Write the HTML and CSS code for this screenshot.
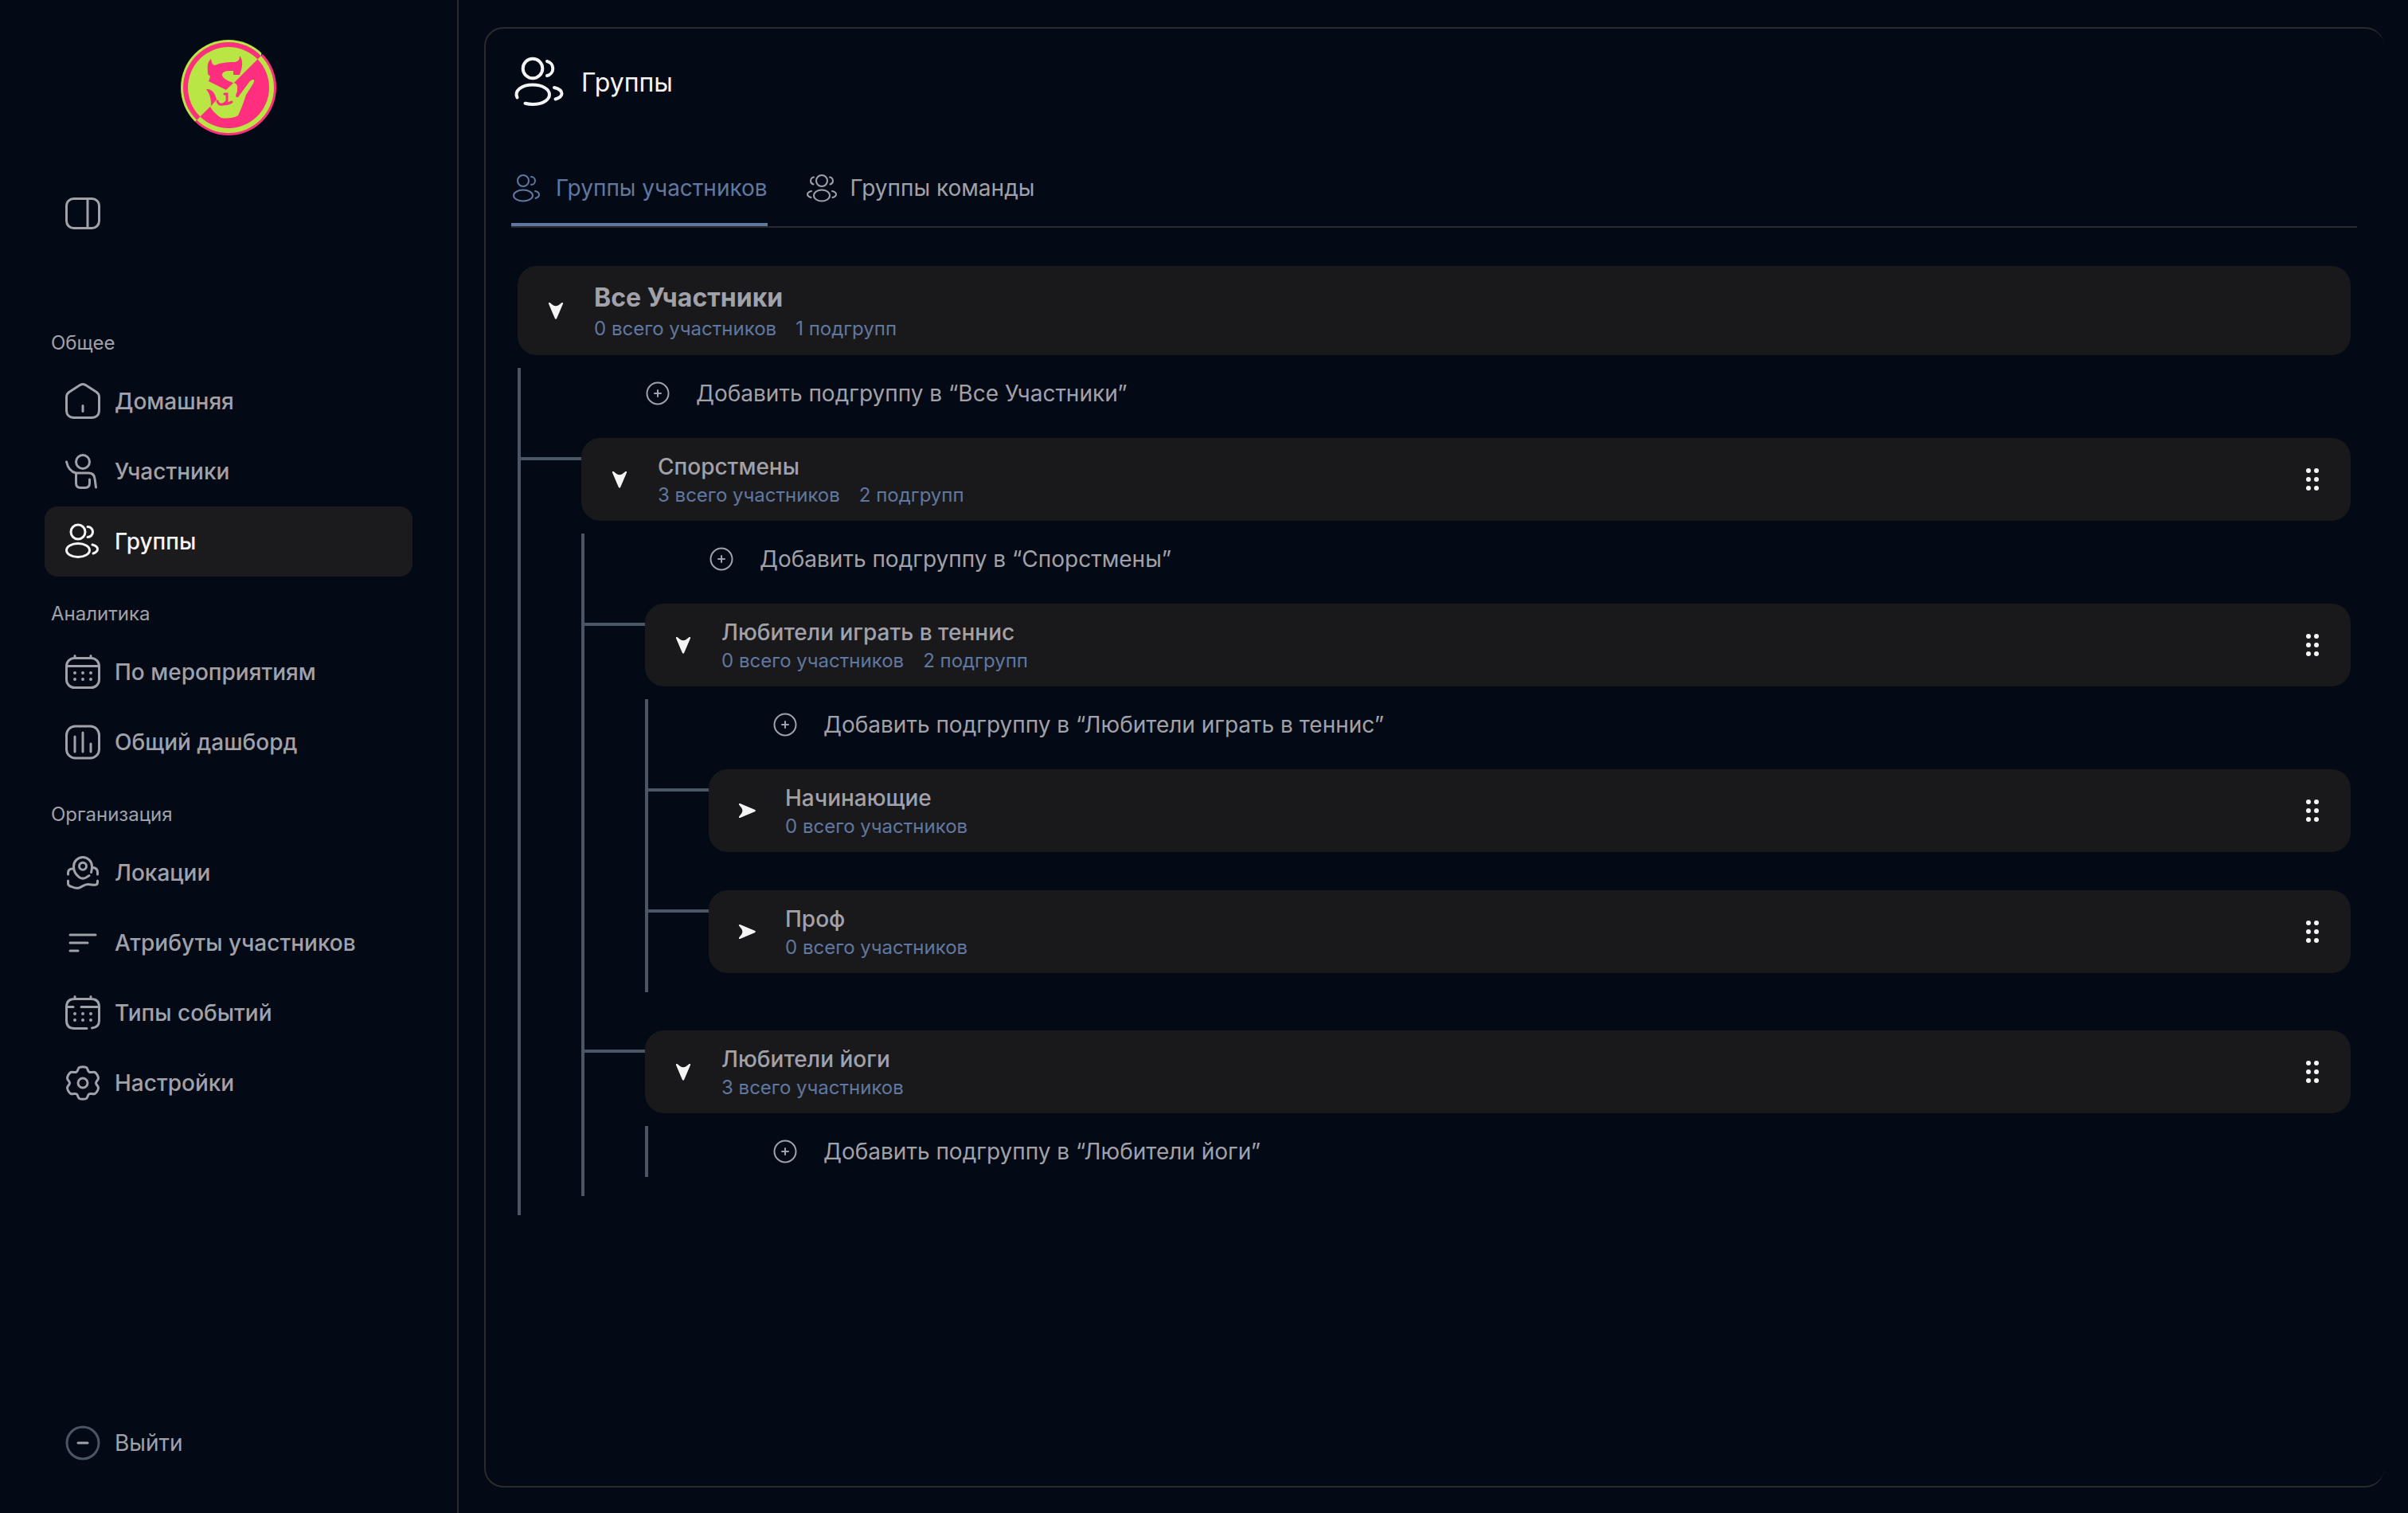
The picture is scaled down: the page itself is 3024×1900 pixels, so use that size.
FILE: index.html
```
<!DOCTYPE html>
<html lang="ru">
<head>
  <meta charset="UTF-8">
  <meta name="viewport" content="width=device-width, initial-scale=1.0">
  <title>Группы</title>
  <link rel="stylesheet" href="styles.css">
</head>
<body>
<!-- Shared icons -->
<svg class="sprite" aria-hidden="true">
  <symbol id="i-arrow" viewBox="0 0 24 24">
    <path d="M3 3.400C2.500 2 3.700 1.500 4.800 2.200L8.500 5.200C10.800 6.700 13.200 6.700 15.500 5.200L19.200 2.200C20.300 1.500 21.500 2 21 3.400L13.200 21.800C12.600 23.200 11.400 23.200 10.800 21.800Z"/>
  </symbol>
  <symbol id="i-plus" viewBox="0 0 32 32">
    <circle cx="16" cy="16" r="13.500"/>
    <path d="M16 12v8M12 16h8"/>
  </symbol>
  <symbol id="i-grip" viewBox="0 0 16 28">
    <circle cx="3" cy="3" r="3"/><circle cx="13" cy="3" r="3"/>
    <circle cx="3" cy="14" r="3"/><circle cx="13" cy="14" r="3"/>
    <circle cx="3" cy="25" r="3"/><circle cx="13" cy="25" r="3"/>
  </symbol>
</svg>

<div class="layout">
  <aside class="sidebar">
    <a class="logo" href="#" aria-label="Главная">
      <svg viewBox="0 0 120 120">
        <defs>
          <clipPath id="half-top"><path d="M0 0H104L101 20 20 101 0 120Z"/></clipPath>
          <clipPath id="half-bottom"><path d="M120 0H120V120H0L20 101 101 20Z"/></clipPath>
        </defs>
        <g clip-path="url(#half-top)">
          <circle cx="60" cy="60" r="60" fill="#b9e545"/>
          <circle cx="60" cy="60" r="57" fill="#ff2e7e"/>
          <circle cx="60" cy="60" r="51" fill="#b9e545"/>
        </g>
        <g clip-path="url(#half-bottom)">
          <circle cx="60" cy="60" r="60" fill="#ff2e7e"/>
          <circle cx="60" cy="60" r="57" fill="#b9e545"/>
          <circle cx="60" cy="60" r="51" fill="#ff2e7e"/>
        </g>
        <path fill="#ff2e7e" d="M38 24C32 29 34 36 34 43L37 46 35 52 57 63 66 54C57 51 50 46 52 43 54 38 61 39 66 39V44H74C76 37 80 28 74 20C74 26 71 28 66 28 57 28 49 29 43 32 39 31 39 28 38 24Z"/>
        <path fill="#b9e545" d="M67 54C72 56 71 59 71 65 68 70 69 73 72 72L86 53C91 48 94 50 91 55L82 69C79 78 76 87 72 95 65 99 56 99 51 98 44 94 39 88 37 84L57 63Z"/>
        <path fill="#ff2e7e" d="M32 62C39 61 43 67 45 75L38 83C38 77 38 70 32 62Z"/>
        <path fill="none" stroke="#ff2e7e" stroke-width="3" stroke-linecap="round" d="M55 68H58V80M46 77C48 83 54 82 57 78M53 81C56 81 61 80 64 78"/>
      </svg>
    </a>

    <button class="toggle" type="button" aria-label="Свернуть меню">
      <svg class="icon" viewBox="0 0 48 48"><rect x="3.500" y="5.500" width="41" height="37" rx="9"/><path d="M30 6v36"/></svg>
    </button>

    <nav class="nav">
      <h2 class="nav-label">Общее</h2>
      <a class="nav-item" href="#">
        <svg class="icon" viewBox="0 0 48 48"><path d="M3.500 18.500c0-3 1-4.500 3.500-6.200L20.500 3.600c2.500-1.500 4.500-1.500 7 0L41 12.300c2.500 1.700 3.500 3.200 3.500 6.200V35c0 6-3.500 9.500-9.500 9.500H13c-6 0-9.500-3.500-9.500-9.500ZM24 29.500v7"/></svg>
        Домашняя
      </a>
      <a class="nav-item" href="#">
        <svg class="icon" viewBox="0 0 48 48"><circle cx="24" cy="12" r="8.500"/><path d="M3.500 12C5 19 9 24.500 15.500 26H31c5 0 7.500 2 8 7L40.500 44M15.500 26v12.500c0 4 1.500 6 5.500 6h6c4 0 5.500-2 5.500-6V34"/></svg>
        Участники
      </a>
      <a class="nav-item active" href="#">
        <svg class="icon" viewBox="0 0 48 48"><circle cx="18" cy="12" r="9"/><path d="M30 5.500a6.500 6.500 0 0 1 0 13M36 28c4 1 6.500 3 6.500 5.500S40 38 37 39"/><ellipse cx="18" cy="35" rx="14.500" ry="8.500"/></svg>
        Группы
      </a>

      <h2 class="nav-label">Аналитика</h2>
      <a class="nav-item" href="#">
        <svg class="icon" viewBox="0 0 48 48"><rect x="3.500" y="6.500" width="41" height="37" rx="10"/><path d="M4 16.500h40M14 3.500v3M34 3.500v3"/><path class="dots" d="M14 25h0M24 25h0M34 25h0M14 33h0M24 33h0M34 33h0"/></svg>
        По мероприятиям
      </a>
      <a class="nav-item" href="#">
        <svg class="icon" viewBox="0 0 48 48"><rect x="3.500" y="4" width="41" height="40" rx="11"/><path d="M14 17v19M24 12v24M34 26v10"/></svg>
        Общий дашборд
      </a>

      <h2 class="nav-label">Организация</h2>
      <a class="nav-item" href="#">
        <svg class="icon" viewBox="0 0 48 48"><circle cx="24" cy="15.700" r="4.500"/><path d="M32 27.500L28 30c-2.500 1.400-5.500 1.400-8 0-5-3.500-7.500-9-7.500-14a11.500 11.500 0 0 1 23 0c0 3-.3 5-1 7.500M11 19c-3.500 0-5.500 1.500-5.500 5v2M37 17.500c3.500.5 5.500 2.500 5.500 6v2.500M5.500 34v3.500c0 2.500 2 3.500 4.500 4 3 1.500 6 2.500 9 1.500 4-1.500 7-4.500 11.500-4.500 3 0 6 1 9 .8 2-.2 3-1.300 3-3V34"/></svg>
        Локации
      </a>
      <a class="nav-item" href="#">
        <svg class="icon" viewBox="0 0 48 48"><path d="M8 14h32M8 24h22M8 34h10"/></svg>
        Атрибуты участников
      </a>
      <a class="nav-item" href="#">
        <svg class="icon" viewBox="0 0 48 48"><path d="M29 43.500H13.500c-6.500 0-10-3.500-10-10v-17c0-6.500 3.500-10 10-10h21c6.500 0 10 3.500 10 10v17c0 5.500-3 9-9 9.500M4 16.500h8M22 16.500h22M14 3.500v3M34 3.500v3"/><path class="dots" d="M14 25h0M24 25h0M34 25h0M14 33h0M24 33h0M34 33h0"/></svg>
        Типы событий
      </a>
      <a class="nav-item" href="#">
        <svg class="icon" viewBox="0 0 48 48"><circle cx="24" cy="24" r="6"/><path d="M19.500 4.500c2-1 7-1 9 0 2 1.500 1.500 4.500 3.500 5.700 2.200 1.300 4.500-.7 7 .300 2.300 1 4.500 5 4.500 7.500 0 2.500-3 3.500-3 6s3 3.500 3 6c0 2.500-2.200 6.500-4.500 7.500-2.500 1-4.800-1-7 .300-2 1.200-1.500 4.200-3.500 5.700-2 1-7 1-9 0-2-1.500-1.500-4.500-3.500-5.700-2.200-1.300-4.500.7-7-.300-2.300-1-4.500-5-4.500-7.500 0-2.500 3-3.500 3-6s-3-3.500-3-6c0-2.500 2.200-6.500 4.500-7.500 2.500-1 4.800 1 7-.300 2-1.200 1.500-4.200 3.500-5.700Z"/></svg>
        Настройки
      </a>
    </nav>

    <button class="nav-item logout" type="button">
      <svg class="icon" viewBox="0 0 48 48"><circle class="ring" cx="24" cy="24" r="20"/><path d="M18 24h12"/></svg>
      Выйти
    </button>
  </aside>

  <main class="panel">
    <header class="page-header">
      <svg class="page-icon" viewBox="0 0 72 72"><circle cx="27" cy="18" r="12.300"/><path d="M45 9a9.200 9.200 0 0 1 0 18M54 42c6 1.500 9.500 4 9.500 7.500S60.500 55 55.500 56.500M7.500 54.500C3.500 46 13 38.500 27 38.500c12 0 21 5.500 21 12.300S39 63 27 63c-3.500 0-6.500-.400-9.500-1.200"/></svg>
      <h1>Группы</h1>
    </header>

    <div class="tabs" role="tablist">
      <button class="tab active" type="button" role="tab" aria-selected="true">
        <svg class="tab-icon" viewBox="0 0 40 40"><circle cx="15" cy="11" r="7"/><path d="M25 6a5 5 0 0 1 0 10M30 24c3.500.8 5 2.500 5 4.500s-1.500 3.500-4.500 4.500"/><ellipse cx="15" cy="29.500" rx="12" ry="7"/></svg>
        Группы участников
      </button>
      <button class="tab" type="button" role="tab" aria-selected="false">
        <svg class="tab-icon" viewBox="0 0 40 40"><circle cx="20" cy="11" r="7"/><path d="M30 6.500a4.600 4.600 0 0 1 .5 9M10 6.500a4.600 4.600 0 0 0-.5 9M33 24c3.500.8 5 2.200 5 4s-1.500 3.200-4.500 4M7 24c-3.500.8-5 2.200-5 4s1.500 3.200 4.500 4"/><ellipse cx="20" cy="29.500" rx="10" ry="7"/></svg>
        Группы команды
      </button>
    </div>

    <div class="tree">
      <div class="group root">
        <button class="arrow" type="button" aria-label="Свернуть"><svg><use href="#i-arrow"/></svg></button>
        <div class="group-info">
          <h3>Все Участники</h3>
          <p><span>0 всего участников</span><span>1 подгрупп</span></p>
        </div>
      </div>
      <ul class="children">
        <li class="add-row"><button class="add" type="button"><svg><use href="#i-plus"/></svg>Добавить подгруппу в “Все Участники”</button></li>
        <li class="node">
          <span class="branch"></span>
          <div class="node-body">
            <div class="group">
              <button class="arrow" type="button" aria-label="Свернуть"><svg><use href="#i-arrow"/></svg></button>
              <div class="group-info">
                <h3>Спорстмены</h3>
                <p><span>3 всего участников</span><span>2 подгрупп</span></p>
              </div>
              <button class="grip" type="button" aria-label="Переместить"><svg><use href="#i-grip"/></svg></button>
            </div>
            <ul class="children">
              <li class="add-row"><button class="add" type="button"><svg><use href="#i-plus"/></svg>Добавить подгруппу в “Спорстмены”</button></li>
              <li class="node">
                <span class="branch"></span>
                <div class="node-body">
                  <div class="group">
                    <button class="arrow" type="button" aria-label="Свернуть"><svg><use href="#i-arrow"/></svg></button>
                    <div class="group-info">
                      <h3>Любители играть в теннис</h3>
                      <p><span>0 всего участников</span><span>2 подгрупп</span></p>
                    </div>
                    <button class="grip" type="button" aria-label="Переместить"><svg><use href="#i-grip"/></svg></button>
                  </div>
                  <ul class="children">
                    <li class="add-row"><button class="add" type="button"><svg><use href="#i-plus"/></svg>Добавить подгруппу в “Любители играть в теннис”</button></li>
                    <li class="node">
                      <span class="branch"></span>
                      <div class="node-body">
                        <div class="group">
                          <button class="arrow closed" type="button" aria-label="Развернуть"><svg><use href="#i-arrow"/></svg></button>
                          <div class="group-info">
                            <h3>Начинающие</h3>
                            <p><span>0 всего участников</span></p>
                          </div>
                          <button class="grip" type="button" aria-label="Переместить"><svg><use href="#i-grip"/></svg></button>
                        </div>
                      </div>
                    </li>
                    <li class="node">
                      <span class="branch"></span>
                      <div class="node-body">
                        <div class="group">
                          <button class="arrow closed" type="button" aria-label="Развернуть"><svg><use href="#i-arrow"/></svg></button>
                          <div class="group-info">
                            <h3>Проф</h3>
                            <p><span>0 всего участников</span></p>
                          </div>
                          <button class="grip" type="button" aria-label="Переместить"><svg><use href="#i-grip"/></svg></button>
                        </div>
                      </div>
                    </li>
                  </ul>
                </div>
              </li>
              <li class="node">
                <span class="branch"></span>
                <div class="node-body">
                  <div class="group">
                    <button class="arrow" type="button" aria-label="Свернуть"><svg><use href="#i-arrow"/></svg></button>
                    <div class="group-info">
                      <h3>Любители йоги</h3>
                      <p><span>3 всего участников</span></p>
                    </div>
                    <button class="grip" type="button" aria-label="Переместить"><svg><use href="#i-grip"/></svg></button>
                  </div>
                  <ul class="children">
                    <li class="add-row"><button class="add" type="button"><svg><use href="#i-plus"/></svg>Добавить подгруппу в “Любители йоги”</button></li>
                  </ul>
                </div>
              </li>
            </ul>
          </div>
        </li>
      </ul>
    </div>
  </main>
</div>
</body>
</html>
```
FILE: styles.css
```
:root {
  --bg: #030a15;
  --card: #19191b;
  --border: #2b2b2e;
  --line: #4b5563;
  --text: #a1a1aa;
  --bright: #f4f4f5;
  --accent: #6078a0;
}

* {
  box-sizing: border-box;
  margin: 0;
  padding: 0;
}

body {
  background-color: var(--bg);
  color: var(--text);
  font-family: Inter, "Liberation Sans", sans-serif;
  font-size: 28px;
  line-height: 40px;
}

button {
  background: none;
  border: none;
  color: inherit;
  font: inherit;
  cursor: pointer;
}

a {
  color: inherit;
  text-decoration: none;
}

ul {
  list-style: none;
}

svg {
  display: block;
  flex-shrink: 0;
}

.sprite {
  display: none;
}

.layout {
  display: flex;
  min-height: 100vh;
}

/* Sidebar */
.sidebar {
  width: 576px;
  flex-shrink: 0;
  display: flex;
  flex-direction: column;
  padding: 50px 56px 44px;
  border-right: 2px solid var(--border);
}

.logo {
  align-self: center;
}

.logo svg {
  width: 120px;
  height: 120px;
}

.toggle {
  align-self: flex-start;
  margin: 74px 0 92px;
  padding: 0 24px;
}

.icon {
  width: 48px;
  height: 48px;
  fill: none;
  stroke: currentColor;
  stroke-width: 3;
  stroke-linecap: round;
  stroke-linejoin: round;
}

.icon .dots {
  stroke-width: 4;
}

.icon .ring {
  stroke: var(--line);
}

.nav {
  flex: 1;
}

.nav-label {
  padding: 31px 8px 13px;
  font-size: 24px;
  font-weight: 400;
  line-height: 32px;
}

.nav-item {
  display: flex;
  align-items: center;
  gap: 16px;
  width: 100%;
  height: 88px;
  padding: 0 24px;
  border-radius: 16px;
  font-weight: 500;
}

.nav-item.active {
  background-color: #1b1b1d;
  color: var(--bright);
}

.logout {
  font-weight: 400;
}

/* Content panel */
.panel {
  flex: 1;
  margin: 34px 30px 32px 32px;
  padding: 32px 34px 32px 32px;
  border: 2px solid var(--border);
  border-right: none;
  border-radius: 24px;
}

.page-header {
  display: flex;
  align-items: center;
  gap: 16px;
  color: var(--bright);
}

.page-icon {
  width: 72px;
  height: 72px;
  fill: none;
  stroke: currentColor;
  stroke-width: 4;
  stroke-linecap: round;
}

h1 {
  font-size: 32px;
  font-weight: 400;
}

.tabs {
  display: flex;
  gap: 48px;
  margin-top: 60px;
  border-bottom: 2px solid var(--border);
}

.tab {
  display: flex;
  align-items: center;
  gap: 16px;
  padding: 16px 0 24px;
  border-bottom: 4px solid transparent;
}

.tab.active {
  color: var(--accent);
  border-bottom-color: var(--accent);
}

.tab-icon {
  width: 40px;
  height: 40px;
  fill: none;
  stroke: currentColor;
  stroke-width: 2;
  stroke-linecap: round;
}

/* Group tree */
.tree {
  padding: 48px 8px;
}

.group {
  display: flex;
  align-items: center;
  gap: 24px;
  height: 104px;
  padding: 0 24px;
  background-color: var(--card);
  border-radius: 24px;
}

.group.root {
  height: 112px;
}

.arrow,
.grip {
  display: flex;
  align-items: center;
  justify-content: center;
  width: 48px;
  height: 48px;
  color: var(--bright);
}

.arrow svg {
  width: 24px;
  height: 24px;
  fill: currentColor;
}

.arrow.closed svg {
  transform: rotate(-90deg);
}

.grip svg {
  width: 16px;
  height: 28px;
  fill: currentColor;
}

.group-info {
  flex: 1;
  padding-top: 4px;
}

.group h3 {
  font-size: 28px;
  font-weight: 500;
  line-height: 36px;
}

.group.root h3 {
  font-size: 32px;
  font-weight: 700;
  line-height: 42px;
}

.group p {
  display: flex;
  gap: 24px;
  color: var(--accent);
  font-size: 24px;
  line-height: 36px;
}

.children {
  margin-top: 16px;
  border-left: 4px solid var(--line);
}

.add-row {
  padding-left: 156px;
}

.add {
  display: flex;
  align-items: center;
  gap: 32px;
  height: 64px;
}

.add svg {
  width: 32px;
  height: 32px;
  fill: none;
  stroke: currentColor;
  stroke-width: 2;
  stroke-linecap: round;
}

.node {
  display: flex;
  padding: 24px 0;
}

.branch {
  width: 76px;
  height: 4px;
  margin-top: 24px;
  background-color: var(--line);
}

.node-body {
  flex: 1;
}
```
